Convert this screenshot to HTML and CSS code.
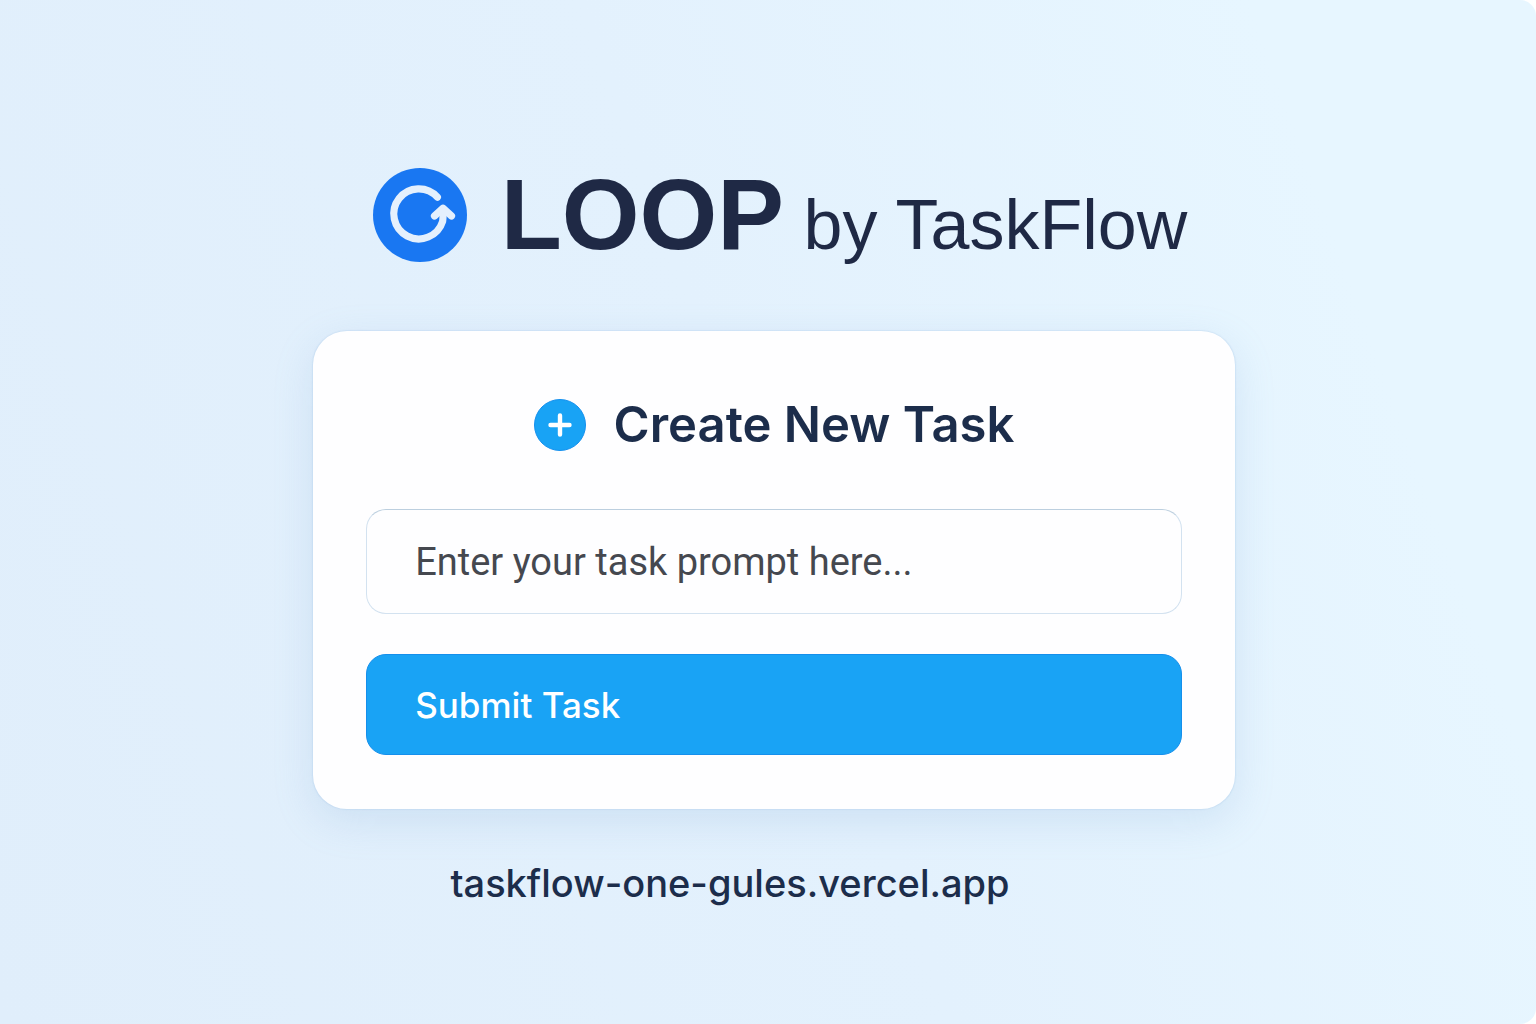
FILE: index.html
```html
<!DOCTYPE html>
<html lang="en">
<head>
  <meta charset="utf-8">
  <meta name="viewport" content="width=device-width, initial-scale=1">
  <title>LOOP by TaskFlow</title>
  <link rel="stylesheet" href="styles.css">
</head>
<body>
  <div class="page">
    <header class="brand">
      <svg class="brand-logo" viewBox="0 0 94 94" aria-hidden="true">
        <circle cx="47" cy="47" r="47" fill="#1977f2"/>
        <g fill="none" stroke="#e4f0fd" stroke-width="7.2" stroke-linecap="round" stroke-linejoin="round">
          <path d="M64.4 29.2A25 25 0 1 0 69.600 53.500Q70.300 49 70 41"/>
          <path d="M61.500 48L70 40.200L78.500 48"/>
        </g>
      </svg>
      <h1 class="brand-title"><strong class="brand-name">LOOP</strong> <span class="brand-by">by TaskFlow</span></h1>
    </header>

    <main class="card">
      <div class="card-head">
        <svg class="card-icon" viewBox="0 0 52 52" aria-hidden="true">
          <circle cx="26" cy="26" r="25.500" fill="#18a3f5" stroke="#1590ee"/>
          <path d="M26 16.500V35.500M16.500 26H35.500" stroke="#fff" stroke-width="4.400" stroke-linecap="round"/>
        </svg>
        <h2 class="card-title">Create New Task</h2>
      </div>
      <form class="task-form">
        <input class="task-input" type="text" aria-label="Task prompt" placeholder="Enter your task prompt here...">
        <button class="task-submit" type="button">Submit Task</button>
      </form>
    </main>

    <footer class="site"><a class="site-link" href="#">taskflow-one-gules.vercel.app</a></footer>
  </div>
</body>
</html>
```
FILE: styles.css
```css
* {
  box-sizing: border-box;
}

html {
  background: #fff;
}

body {
  margin: 0;
  color: #1f2a44;
  font-family: Inter, "Liberation Sans", sans-serif;
}

.page {
  display: flex;
  flex-direction: column;
  align-items: center;
  min-height: 100vh;
  padding: 158px 0 96px 12px;
  border-radius: 0 16px 16px 0;
  background: linear-gradient(70deg, #e0eefb 0%, #e3f1fd 50%, #e7f6ff 85%);
}

.brand {
  display: flex;
  align-items: flex-start;
  gap: 34px;
  padding-left: 12px;
}

.brand-logo {
  flex: none;
  width: 94px;
  height: 94px;
  margin-top: 10px;
}

.brand-title {
  margin: 0;
  color: #1f2945;
  font-family: "Liberation Sans", Arial, sans-serif;
  font-size: 70px;
  font-weight: 400;
  line-height: 112px;
  white-space: nowrap;
}

.brand-name {
  font-size: 100px;
  font-weight: 700;
}

.card {
  width: 60vw;
  min-width: 640px;
  margin-top: 50px;
  padding: 60px 53px 54px;
  border-radius: 34px;
  background: #fefeff;
  box-shadow: 0 0 1px 1px rgba(160, 195, 230, 0.25), 0 12px 40px rgba(120, 165, 210, 0.2);
}

.card-head {
  display: flex;
  align-items: center;
  justify-content: center;
  gap: 28px;
}

.card-icon {
  flex: none;
  width: 52px;
  height: 52px;
}

.card-title {
  margin: 0;
  color: #1c2d4b;
  font-size: 49px;
  font-weight: 600;
  line-height: 68px;
}

.task-form {
  display: flex;
  flex-direction: column;
  gap: 40px;
  margin-top: 50px;
}

.task-input,
.task-submit {
  width: 100%;
  padding: 0 48px;
  border-radius: 20px;
}

.task-input {
  height: 105px;
  border: 1px solid #d3e2f0;
  border-top-color: #bccfdf;
  background: #fefeff;
  color: #45484f;
  font: 400 38px Roboto, sans-serif;
}

.task-input::placeholder {
  color: #45484f;
  opacity: 1;
}

.task-submit {
  height: 101px;
  border: 1px solid #158fec;
  background: #19a3f5;
  color: #fff;
  font: 500 35px Inter, sans-serif;
  text-align: left;
}

.site {
  margin-top: 48px;
  padding-right: 88px;
}

.site-link {
  color: #1c2d4b;
  font-size: 38px;
  font-weight: 500;
  line-height: 52px;
  text-decoration: none;
}
```
